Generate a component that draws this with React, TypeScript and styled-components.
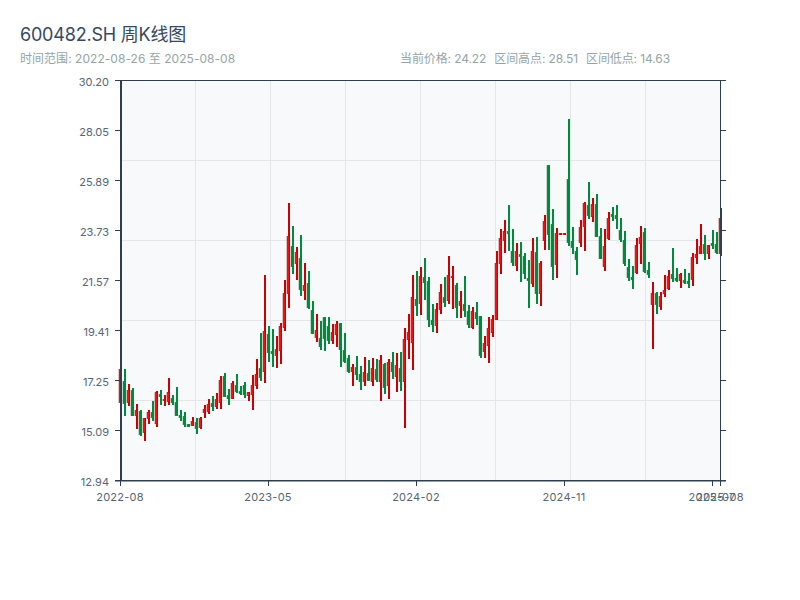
import React from 'react';
import styled, { createGlobalStyle } from 'styled-components';

// [up, wick top, wick bottom, body top, body bottom], y in page pixels, one row per week
type Candle = [number, number, number, number, number];

const candles: Candle[] = [
  [1, 369, 403, 369, 403], [0, 369, 416, 381, 404], [1, 384, 406, 390, 403], [0, 388, 416, 390, 416],
  [1, 404, 429, 410, 416], [0, 410, 436, 411, 435], [1, 418, 441, 418, 433], [1, 410, 424, 412, 419],
  [0, 401, 421, 412, 418], [1, 391, 427, 392, 424], [0, 390, 405, 394, 397], [1, 395, 406, 399, 401],
  [1, 378, 405, 392, 402], [0, 395, 405, 398, 403], [0, 387, 416, 402, 416], [0, 410, 421, 415, 418],
  [0, 412, 427, 416, 425], [0, 424, 427, 424, 427], [1, 417, 426, 421, 426], [0, 418, 434, 422, 429],
  [1, 417, 429, 418, 428], [1, 405, 418, 409, 413], [1, 399, 414, 404, 412], [0, 396, 411, 403, 407],
  [1, 393, 409, 399, 407], [1, 376, 409, 380, 403], [0, 373, 397, 376, 397], [0, 389, 405, 395, 399],
  [1, 381, 399, 383, 399], [0, 374, 393, 385, 392], [0, 386, 395, 391, 394], [0, 382, 398, 385, 395],
  [1, 392, 401, 392, 396], [1, 375, 410, 385, 395], [1, 359, 389, 374, 386], [0, 333, 381, 368, 378],
  [1, 275, 383, 331, 372], [0, 326, 362, 334, 353], [0, 329, 367, 351, 354], [1, 336, 368, 349, 356],
  [1, 323, 364, 326, 351], [1, 280, 331, 293, 328], [1, 203, 308, 236, 294], [0, 226, 274, 246, 267],
  [1, 247, 280, 252, 264], [0, 235, 296, 258, 290], [1, 263, 300, 285, 291], [0, 271, 309, 283, 308],
  [0, 301, 334, 310, 334], [1, 314, 342, 330, 338], [0, 321, 350, 338, 347], [0, 317, 351, 317, 339],
  [0, 317, 344, 326, 341], [1, 324, 344, 332, 341], [1, 321, 347, 324, 335], [0, 323, 367, 323, 350],
  [0, 333, 363, 350, 362], [0, 355, 373, 358, 372], [1, 364, 386, 367, 372], [0, 356, 380, 367, 375],
  [0, 366, 390, 374, 382], [1, 357, 386, 372, 382], [0, 360, 381, 373, 381], [1, 358, 386, 368, 382],
  [0, 359, 382, 369, 380], [1, 355, 401, 360, 382], [0, 363, 394, 364, 388], [1, 359, 399, 362, 386],
  [0, 352, 379, 362, 372], [1, 353, 392, 365, 377], [0, 352, 391, 368, 382], [1, 328, 428, 339, 382],
  [1, 314, 359, 332, 340], [1, 275, 370, 297, 343], [0, 271, 316, 299, 306], [1, 267, 315, 276, 304],
  [0, 258, 300, 277, 283], [0, 277, 327, 281, 320], [0, 304, 332, 320, 325], [1, 303, 333, 309, 326],
  [1, 284, 314, 292, 310], [0, 277, 307, 297, 303], [1, 256, 304, 275, 301], [1, 266, 309, 276, 278],
  [0, 283, 318, 285, 308], [1, 291, 318, 301, 306], [0, 276, 317, 304, 311], [0, 305, 328, 311, 325],
  [1, 307, 329, 311, 328], [0, 302, 325, 312, 319], [0, 316, 358, 316, 356], [1, 336, 358, 343, 352],
  [1, 317, 363, 328, 346], [1, 315, 337, 319, 333], [1, 251, 320, 263, 320], [1, 229, 274, 238, 264],
  [1, 220, 253, 231, 241], [0, 205, 251, 231, 234], [0, 229, 266, 251, 263], [1, 243, 271, 251, 266],
  [0, 242, 282, 254, 257], [0, 253, 279, 256, 274], [0, 260, 308, 278, 281], [1, 238, 287, 251, 284],
  [0, 237, 304, 252, 294], [1, 261, 306, 263, 294], [1, 215, 250, 221, 241], [0, 165, 250, 165, 235],
  [0, 209, 280, 224, 267], [1, 228, 278, 233, 265], [1, 233, 235, 233, 235], [1, 233, 235, 233, 235],
  [0, 119, 246, 179, 243], [0, 227, 254, 241, 248], [0, 247, 275, 251, 260], [1, 220, 247, 227, 243],
  [1, 202, 251, 203, 227], [0, 182, 219, 205, 216], [1, 198, 222, 204, 217], [0, 194, 237, 204, 237],
  [0, 228, 259, 236, 259], [1, 229, 271, 246, 267], [1, 212, 240, 218, 239], [0, 207, 221, 214, 217],
  [0, 205, 229, 215, 219], [0, 218, 242, 230, 240], [0, 231, 266, 240, 264], [0, 259, 281, 267, 278],
  [0, 266, 289, 277, 280], [1, 238, 274, 245, 273], [1, 226, 264, 237, 244], [0, 228, 273, 232, 272],
  [0, 262, 278, 270, 275], [1, 282, 349, 293, 305], [0, 292, 314, 293, 305], [1, 292, 310, 296, 307],
  [1, 275, 297, 290, 294], [1, 270, 290, 276, 289], [0, 248, 282, 274, 279], [0, 268, 282, 278, 281],
  [1, 273, 288, 274, 281], [0, 269, 284, 280, 283], [0, 273, 288, 281, 284], [1, 253, 286, 257, 280],
  [1, 239, 264, 254, 258], [1, 224, 254, 246, 254], [0, 235, 260, 244, 254], [1, 245, 259, 245, 254],
  [0, 230, 249, 243, 246], [0, 232, 254, 244, 253], [1, 208, 256, 218, 254],
];

const yLabels = ['30.20', '28.05', '25.89', '23.73', '21.57', '19.41', '17.25', '15.09', '12.94'];
const xLabels: [number, string][] = [
  [120, '2022-08'],
  [268, '2023-05'],
  [416, '2024-02'],
  [564, '2024-11'],
  [712, '2025-07'],
  [720, '2025-08'],
];

const GlobalStyle = createGlobalStyle`
  body {
    margin: 0;
    background: #ffffff;
    font-family: "Inter", "Noto Sans CJK SC", sans-serif;
  }
`;

const Page = styled.div`
  width: 800px;
  height: 600px;
  overflow: hidden;
`;

const Header = styled.header`
  padding: 23px 20px 0;
`;

const Title = styled.h1`
  margin: 0;
  font-size: 18px;
  font-weight: 400;
  line-height: 24px;
  letter-spacing: -0.2px;
  color: #34495e;
`;

const Meta = styled.div`
  display: grid;
  grid-template-columns: 1fr 1fr;
  margin-top: 4px;
  font-size: 12px;
  line-height: 16px;
  color: #95a5a6;
`;

const Range = styled.span`
  letter-spacing: 0.04px;
`;

const Stats = styled.div`
  display: flex;
  gap: 8px;
  letter-spacing: -0.1px;
`;

const Chart = styled.svg`
  display: block;
  margin-top: 3px;
`;

const PlotArea = styled.rect`
  fill: #f8f9fa;
`;

const GridLine = styled.line`
  stroke: #e3e6ea;
  stroke-width: 1;
`;

const AxisLine = styled.line<{ $weight?: number }>`
  stroke: #2c3e50;
  stroke-width: ${(p) => p.$weight ?? 1};
`;

const TickLabel = styled.text<{ $spacing?: number }>`
  font-family: "Inter", "Noto Sans CJK SC", sans-serif;
  font-size: 11px;
  letter-spacing: ${(p) => p.$spacing ?? 0}px;
  fill: #566573;
`;

const Wick = styled.rect<{ $up: boolean }>`
  fill: ${(p) => (p.$up ? '#cc0000' : '#008a3c')};
`;

const Body = styled.rect<{ $up: boolean }>`
  fill: ${(p) => (p.$up ? '#ff1414' : '#008a3c')};
  stroke: ${(p) => (p.$up ? '#cc0000' : '#008a3c')};
  stroke-width: 0.5;
`;

const Candlestick: React.FC<{ index: number; candle: Candle }> = ({ index, candle }) => {
  const [up, wickTop, wickBottom, bodyTop, bodyBottom] = candle;
  const x = 120 + index * 4;

  return (
    <g>
      <Wick $up={!!up} x={x} y={wickTop} width={2} height={wickBottom - wickTop} />
      <Body $up={!!up} x={x - 1} y={bodyTop + 0.25} width={2} height={bodyBottom - bodyTop - 0.5} />
    </g>
  );
};

const App: React.FC = () => {
  return (
    <Page>
      <GlobalStyle />
      <Header>
        <Title>600482.SH 周K线图</Title>
        <Meta>
          <Range>时间范围: 2022-08-26 至 2025-08-08</Range>
          <Stats>
            <span>当前价格: 24.22</span>
            <span>区间高点: 28.51</span>
            <span>区间低点: 14.63</span>
          </Stats>
        </Meta>
      </Header>
      <Chart width={800} height={450} viewBox="0 70 800 450">
        <PlotArea x={121} y={81} width={600} height={400} />
        {[160, 240, 320, 400].map((y) => (
          <GridLine key={y} x1={121} x2={720} y1={y + 0.5} y2={y + 0.5} />
        ))}
        {[195, 270, 345, 420, 495, 570, 645].map((x) => (
          <GridLine key={x} x1={x + 0.5} x2={x + 0.5} y1={81} y2={481} />
        ))}
        {candles.map((candle, i) => (
          <Candlestick key={i} index={i} candle={candle} />
        ))}
        <AxisLine $weight={2} x1={121} x2={121} y1={81} y2={481} />
        <AxisLine x1={720.5} x2={720.5} y1={81} y2={481} />
        <AxisLine x1={115} x2={726} y1={80.5} y2={80.5} />
        <AxisLine $weight={1.5} x1={115} x2={726} y1={480.75} y2={480.75} />
        {yLabels.map((label, i) => (
          <g key={label}>
            <AxisLine x1={115} x2={121} y1={80.5 + i * 50} y2={80.5 + i * 50} />
            <AxisLine x1={720} x2={726} y1={80.5 + i * 50} y2={80.5 + i * 50} />
            <TickLabel x={109} y={86 + i * 50} textAnchor="end">
              {label}
            </TickLabel>
          </g>
        ))}
        {xLabels.map(([x, label]) => (
          <g key={label}>
            <AxisLine x1={x + 0.5} x2={x + 0.5} y1={481} y2={486} />
            <TickLabel $spacing={0.25} x={x} y={501} textAnchor="middle">
              {label}
            </TickLabel>
          </g>
        ))}
      </Chart>
    </Page>
  );
};

export default App;
